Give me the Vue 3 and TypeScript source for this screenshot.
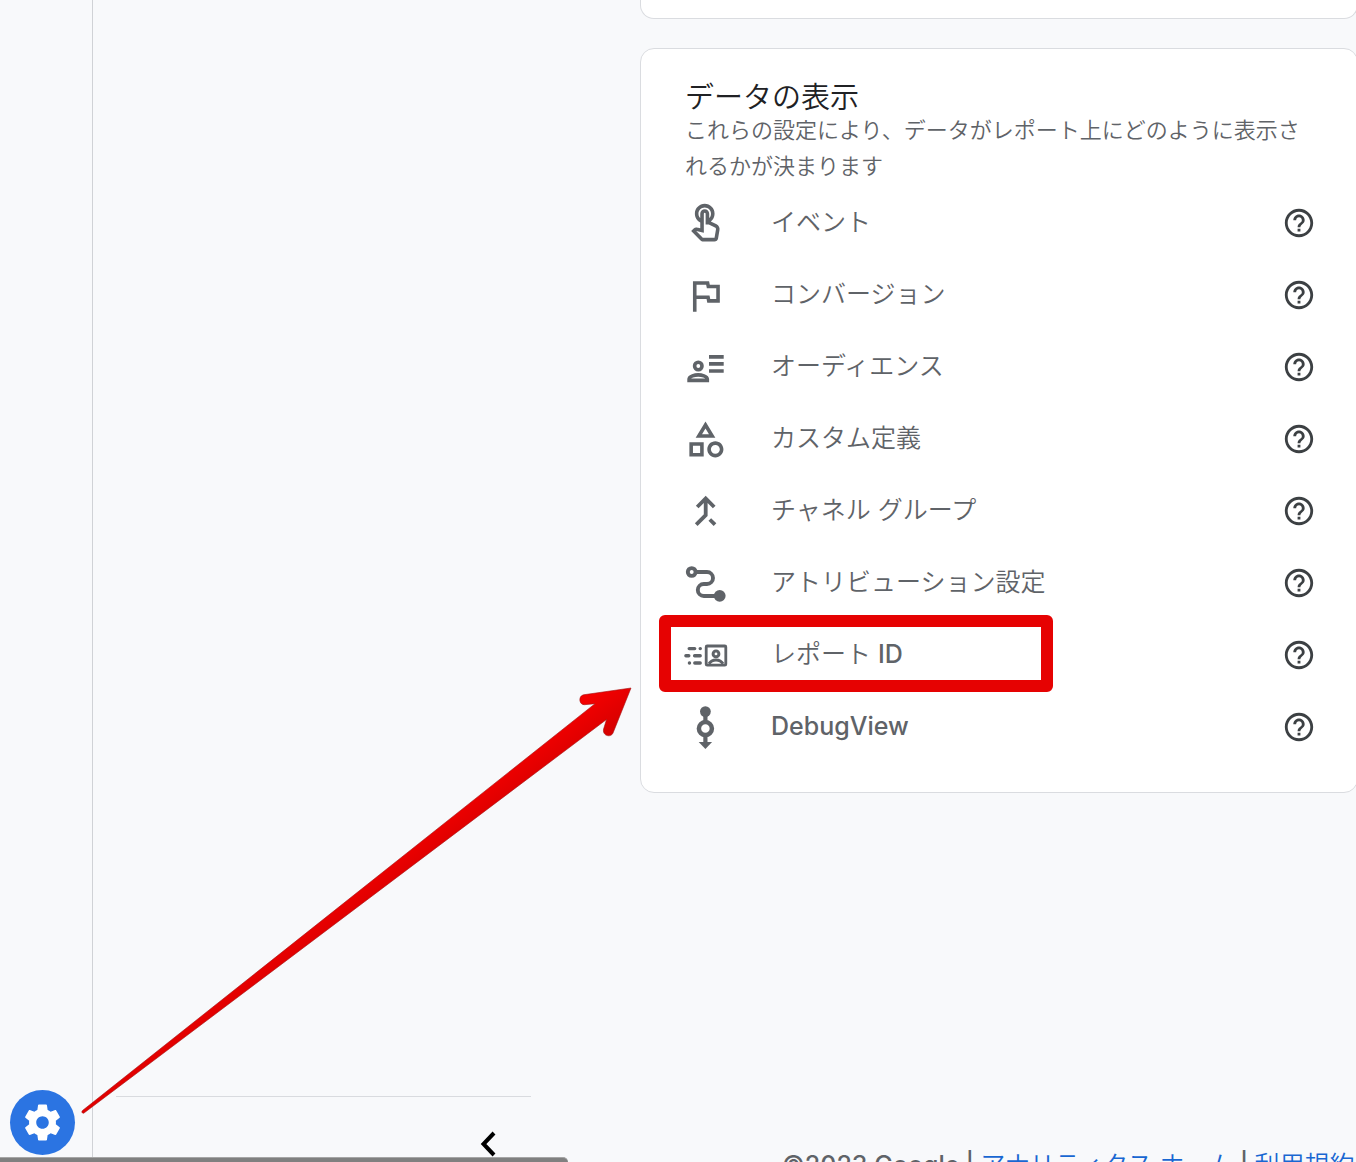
<script setup lang="ts">
interface Item {
  id: string
  label: string
  latin?: string
}

const items: Item[] = [
  { id: 'events', label: 'イベント' },
  { id: 'conversions', label: 'コンバージョン' },
  { id: 'audiences', label: 'オーディエンス' },
  { id: 'definitions', label: 'カスタム定義' },
  { id: 'channels', label: 'チャネル グループ' },
  { id: 'attribution', label: 'アトリビューション設定' },
  { id: 'identity', label: 'レポート ', latin: 'ID' },
  { id: 'debug', label: '', latin: 'DebugView' },
]
</script>

<template>
  <div class="page">
    <aside class="rail">
      <button class="admin" type="button" aria-label="管理">
        <svg viewBox="0 0 24 24" width="43" height="43" fill="currentColor">
          <path d="M19.43 12.98c.04-.32.07-.64.07-.98s-.03-.66-.07-.98l2.11-1.65c.19-.15.24-.42.12-.64l-2-3.46c-.12-.22-.39-.3-.61-.22l-2.49 1c-.52-.4-1.08-.73-1.69-.98l-.38-2.65C14.46 2.18 14.25 2 14 2h-4c-.25 0-.46.18-.49.42l-.38 2.65c-.61.25-1.17.59-1.69.98l-2.49-1c-.23-.09-.49 0-.61.22l-2 3.46c-.13.22-.07.49.12.64l2.11 1.65c-.04.32-.07.65-.07.98s.03.66.07.98l-2.11 1.65c-.19.15-.24.42-.12.64l2 3.46c.12.22.39.3.61.22l2.49-1c.52.4 1.08.73 1.69.98l.38 2.65c.03.24.24.42.49.42h4c.25 0 .46-.18.49-.42l.38-2.65c.61-.25 1.17-.59 1.69-.98l2.49 1c.23.09.49 0 .61-.22l2-3.46c.12-.22.07-.49-.12-.64l-2.11-1.65zM12 15.5c-1.93 0-3.5-1.57-3.5-3.5s1.57-3.5 3.5-3.5 3.5 1.57 3.5 3.5-1.57 3.5-3.5 3.5z" />
        </svg>
      </button>
    </aside>

    <nav class="side">
      <div class="side-foot">
        <button class="collapse" type="button" aria-label="閉じる">
          <svg viewBox="0 0 24 28" width="24" height="28" fill="none" stroke="currentColor" stroke-width="4">
            <path d="M18 3 7.5 14 18 25" />
          </svg>
        </button>
      </div>
    </nav>

    <main class="main">
      <section class="card card-prev"></section>

      <section class="card card-data">
        <h2 class="title">データの表示</h2>
        <p class="desc">これらの設定により、データがレポート上にどのように表示されるかが決まります</p>

        <ul class="list">
          <li v-for="item in items" :key="item.id" class="row" :class="{ marked: item.id === 'identity' }">
            <a class="link" href="#">
              <svg v-if="item.id === 'events'" class="icon" viewBox="0 0 24 24" fill="currentColor">
                <path d="M18.19 12.44l-3.24-1.62c1.29-1 2.12-2.56 2.12-4.32 0-3.03-2.47-5.5-5.5-5.5s-5.5 2.47-5.5 5.5c0 2.13 1.22 3.98 3 4.89v3.26c-2.15-.46-2.02-.44-2.26-.44-.53 0-1.03.21-1.41.59L4 16.22l5.09 5.09c.43.44 1.03.69 1.65.69h6.3c.98 0 1.81-.7 1.97-1.67l.8-4.71c.22-1.3-.43-2.58-1.62-3.18zM17.84 15.29L17.04 20h-6.3c-.09 0-.17-.04-.24-.1l-3.68-3.68 4.25.89V6.5c0-.28.22-.5.5-.5s.5.22.5.5v6h1.76l3.46 1.73c.4.2.62.63.55 1.06zM8.07 6.5c0-1.93 1.57-3.5 3.5-3.5s3.5 1.57 3.5 3.5c0 .95-.38 1.81-1 2.44V6.5c0-1.38-1.12-2.5-2.5-2.5s-2.5 1.12-2.5 2.5v2.44c-.62-.63-1-1.49-1-2.44z" />
              </svg>
              <svg v-else-if="item.id === 'conversions'" class="icon" viewBox="0 0 24 24" fill="currentColor">
                <path d="m12.36 6 .4 2H18v6h-3.36l-.4-2H7V6h5.36M14 4H5v17h2v-7h5.6l.4 2h7V6h-5.6L14 4z" />
              </svg>
              <svg v-else-if="item.id === 'audiences'" class="icon" viewBox="0 0 43 43" fill="none" stroke="currentColor" stroke-width="3.6">
                <circle cx="14.3" cy="20" r="3.7" />
                <path d="M5.1 34.4v-1.3c0-3 6-4.2 9.1-4.2s9.1 1.2 9.1 4.2v1.3z" />
                <path d="M25 10.9h14.7M25 17.9h14.7M25 25h14.7" />
              </svg>
              <svg v-else-if="item.id === 'definitions'" class="icon" viewBox="0 0 24 24" fill="currentColor">
                <path d="M12 2l-5.5 9h11L12 2zm0 3.84L13.93 9h-3.87L12 5.84zM17.5 13c-2.49 0-4.5 2.01-4.5 4.5s2.01 4.5 4.5 4.5 4.5-2.01 4.5-4.5-2.01-4.5-4.5-4.5zm0 7c-1.38 0-2.5-1.12-2.5-2.5s1.12-2.5 2.5-2.5 2.5 1.12 2.5 2.5-1.12 2.5-2.5 2.5zM3 21.5h8v-8H3v8zm2-6h4v4H5v-4z" />
              </svg>
              <svg v-else-if="item.id === 'channels'" class="icon" viewBox="0 0 43 43" fill="none" stroke="currentColor" stroke-width="3.8">
                <path d="M13.2 17 21.7 8.5 30.2 17M21.7 9v16.2L12.2 34.7M25.8 29.5l5.2 5.2" />
              </svg>
              <svg v-else-if="item.id === 'attribution'" class="icon" viewBox="0 0 43 43" fill="none" stroke="currentColor" stroke-width="3.9">
                <circle cx="7.7" cy="10" r="3.9" />
                <path d="M12 10h11a6 6 0 0 1 0 12h-3.2a6 6 0 0 0 0 12H33" />
                <circle cx="35.7" cy="33.8" r="5.9" fill="currentColor" stroke="none" />
              </svg>
              <svg v-else-if="item.id === 'identity'" class="icon" viewBox="0 0 43 43" fill="none" stroke="currentColor">
                <rect x="22.2" y="12" width="19.6" height="19.2" rx="1" stroke-width="2.8" />
                <circle cx="32" cy="19.9" r="2.9" stroke-width="3" />
                <path d="M25 29.8c1.5-2.7 4-3.9 7-3.9s5.5 1.2 7 3.9" stroke-width="3" />
                <path d="M5.2 14.6h5.5M16.2 14.6h.1M1.9 21.7h2.9M10.6 21.7h5.6M5.4 29h.1M10.8 29h5.4" stroke-width="3.4" stroke-linecap="round" />
              </svg>
              <svg v-else class="icon" viewBox="0 0 43 43" fill="none" stroke="currentColor">
                <circle cx="21.4" cy="5.6" r="5.4" fill="currentColor" stroke="none" />
                <circle cx="21.4" cy="22.6" r="6.5" stroke-width="4.5" />
                <path d="M21.4 8v8M21.4 30v8" stroke-width="4.2" />
                <path d="M14.7 36h13.4L21.4 43z" fill="currentColor" stroke="none" />
              </svg>
              <span class="label">{{ item.label }}<span v-if="item.latin" class="latin">{{ item.latin }}</span></span>
            </a>
            <button class="help" type="button" :aria-label="item.label + (item.latin ?? '') + ' ヘルプ'">
              <svg viewBox="0 0 24 24" width="34" height="34" fill="currentColor">
                <path d="M11 18h2v-2h-2v2zm1-16C6.48 2 2 6.48 2 12s4.48 10 10 10 10-4.48 10-10S17.52 2 12 2zm0 18c-4.41 0-8-3.59-8-8s3.59-8 8-8 8 3.59 8 8-3.59 8-8 8zm0-14c-2.21 0-4 1.79-4 4h2c0-1.1.9-2 2-2s2 .9 2 2c0 2-3 1.75-3 5h2c0-2.25 3-2.5 3-5 0-2.21-1.79-4-4-4z" />
              </svg>
            </button>
          </li>
        </ul>
      </section>

      <footer class="footer">
        <span class="latin">©2023 Google</span>
        <span class="latin">|</span>
        <a href="#">アナリティクス ホーム</a>
        <span class="latin">|</span>
        <a href="#">利用規約</a>
      </footer>
    </main>

    <svg class="arrow" viewBox="0 0 560 436" width="560" height="436" aria-hidden="true">
      <defs>
        <linearGradient id="arrow-red" gradientUnits="userSpaceOnUse" x1="505" y1="15" x2="530" y2="48">
          <stop offset="0" stop-color="#f40000" />
          <stop offset="1" stop-color="#d60000" />
        </linearGradient>
      </defs>
      <path d="M551 2 503.5 8.8C498 10 499 19 504.5 18.7L515 17.7 2.5 424.5C1 426 2.5 428 4 427L526.5 33.500 523.6 43C522 50 531 52 533 47z" fill="url(#arrow-red)" stroke="#a31212" stroke-width="0.6" />
    </svg>

    <div class="status"></div>
  </div>
</template>

<style>
html,
body {
  overflow: hidden;
}

body {
  margin: 0;
}
</style>

<style scoped>
.page {
  position: relative;
  display: flex;
  height: 100vh;
  overflow: hidden;
  background: #f8f9fb;
  color: #5f6368;
  font-family: Inter, "Noto Sans CJK JP", sans-serif;
  font-weight: 350;
}

button {
  display: flex;
  align-items: center;
  justify-content: center;
  padding: 0;
  border: 0;
  background: none;
  cursor: pointer;
}

.rail {
  display: flex;
  flex: 0 0 92px;
  flex-direction: column;
  justify-content: flex-end;
  border-right: 1px solid #d0d2d6;
}

.admin {
  width: 65px;
  height: 65px;
  margin: 0 0 7px 10px;
  border-radius: 50%;
  background: #2b74e2;
  color: #fff;
}

.side {
  display: flex;
  flex: 0 0 438px;
  flex-direction: column;
  justify-content: flex-end;
}

.side-foot {
  display: flex;
  justify-content: flex-end;
  height: 65px;
  margin-left: 23px;
  padding-right: 31px;
  border-top: 1px solid #d9dbdf;
}

.collapse {
  width: 24px;
  height: 28px;
  margin-top: 33px;
  color: #000;
}

.main {
  display: flex;
  flex: 1;
  flex-direction: column;
  box-sizing: border-box;
  min-width: 0;
  height: calc(100vh + 21px);
  margin-right: -2px;
  padding-left: 109px;
}

.card {
  box-sizing: border-box;
  border: 1px solid #dadce0;
  border-radius: 14px;
  background: #fff;
}

.card-prev {
  flex: 0 0 19px;
  margin-bottom: 29px;
  border-top: 0;
  border-top-left-radius: 0;
  border-top-right-radius: 0;
}

.card-data {
  padding: 35px 41px 29px 44px;
}

.title {
  margin: 0;
  color: #202124;
  font-size: 29px;
  font-weight: 350;
  line-height: 28px;
}

.desc {
  margin: 0 0 3px;
  font-size: 22px;
  line-height: 36px;
}

.list {
  margin: 0;
  padding: 0;
  list-style: none;
}

.row {
  position: relative;
  display: flex;
  align-items: center;
  height: 72px;
}

.link {
  display: flex;
  flex: 1;
  align-items: center;
  gap: 44px;
  color: #5f6368;
  text-decoration: none;
}

.icon {
  flex: none;
  width: 43px;
  height: 43px;
  margin-left: -1px;
  overflow: visible;
}

.label {
  padding-bottom: 2px;
  font-size: 25px;
  line-height: 36px;
}

.latin {
  font-size: 25px;
  font-weight: 500;
}

.help {
  width: 34px;
  height: 34px;
  color: #3c4043;
}

.marked::after {
  position: absolute;
  top: -4px;
  left: -26px;
  box-sizing: border-box;
  width: 394px;
  height: 77px;
  border: 12px solid #e60202;
  border-radius: 6px;
  content: "";
  pointer-events: none;
}

.footer {
  display: flex;
  gap: 6px;
  margin-top: auto;
  padding-left: 142px;
  font-size: 25px;
  line-height: 36px;
  white-space: nowrap;
}

.footer a {
  color: #1967d2;
  text-decoration: none;
}

.arrow {
  position: absolute;
  bottom: 40px;
  left: 80px;
  pointer-events: none;
}

.status {
  position: absolute;
  bottom: 0;
  left: 0;
  box-sizing: border-box;
  width: 568px;
  height: 5px;
  border-top: 1px solid #a6a6a6;
  border-top-right-radius: 6px;
  background: #808080;
}
</style>
